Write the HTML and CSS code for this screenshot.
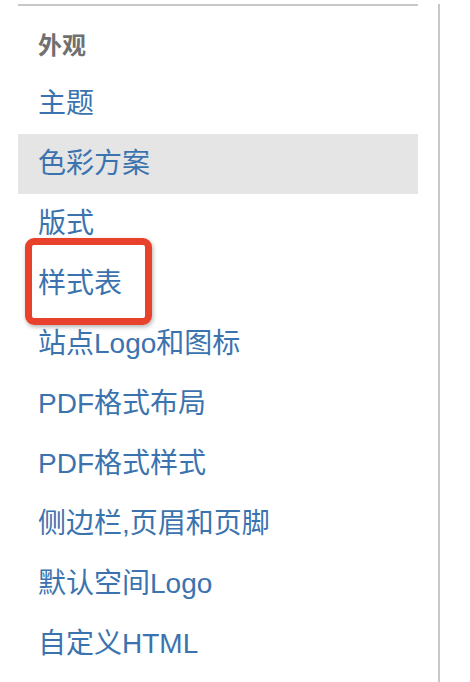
FILE: index.html
```html
<!DOCTYPE html>
<html lang="zh-CN">
<head>
<meta charset="utf-8">
<title>外观</title>
<link rel="stylesheet" href="styles.css">
</head>
<body>
<div class="frame">
  <nav class="sidebar">
    <div class="heading">外观</div>
    <ul class="menu">
      <li class="item"><a href="#">主题</a></li>
      <li class="item active"><a href="#">色彩方案</a></li>
      <li class="item"><a href="#">版式</a></li>
      <li class="item marked"><a href="#">样式表</a><span class="callout"></span></li>
      <li class="item"><a href="#">站点Logo和图标</a></li>
      <li class="item"><a href="#">PDF格式布局</a></li>
      <li class="item"><a href="#">PDF格式样式</a></li>
      <li class="item"><a href="#">侧边栏,页眉和页脚</a></li>
      <li class="item"><a href="#">默认空间Logo</a></li>
      <li class="item"><a href="#">自定义HTML</a></li>
    </ul>
  </nav>
</div>
</body>
</html>
```
FILE: styles.css
```css
html, body {
  margin: 0;
  padding: 0;
  background: #ffffff;
}
body {
  font-family: "Liberation Sans", "Noto Sans CJK SC", sans-serif;
  overflow: hidden;
}
.frame {
  width: 438px;
  height: 682px;
  border-right: 2px solid #c8c8c8;
}
.sidebar {
  margin-left: 18px;
  margin-top: 4px;
  width: 400px;
  border-top: 2px solid #c8c8c8;
}
.heading {
  padding: 28px 0 16px 20px;
  font-size: 24px;
  line-height: 24px;
  font-weight: bold;
  color: #707070;
}
.menu {
  list-style: none;
  margin: 0;
  padding: 0;
}
.item {
  position: relative;
  height: 60px;
}
.item a {
  display: block;
  padding-left: 20px;
  font-size: 28px;
  line-height: 60px;
  color: #3b73af;
  text-decoration: none;
}
.item.active {
  background: #e5e5e5;
}
.callout {
  position: absolute;
  left: 7px;
  top: -16px;
  width: 113px;
  height: 73px;
  border: 7px solid #e8412c;
  border-radius: 9px;
  box-shadow: 1px 2px 4px rgba(0, 0, 0, 0.3);
}
```
